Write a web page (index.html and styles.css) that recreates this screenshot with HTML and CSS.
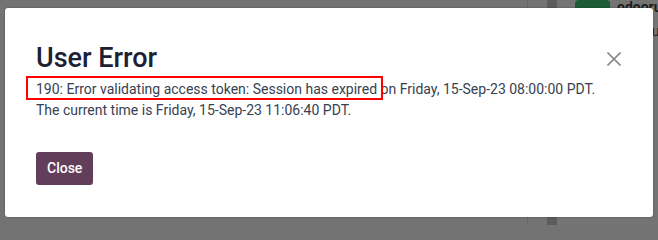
FILE: index.html
```html
<!DOCTYPE html>
<html lang="en">
<head>
<meta charset="utf-8">
<title>User Error</title>
<link rel="stylesheet" href="styles.css">
</head>
<body>
<div class="backdrop">
  <div class="main"></div>
  <div class="gutter"></div>
  <div class="band"></div>
  <div class="chatter">
    <div class="msg">
      <div class="avatar"></div>
      <div class="msg-body">
        <div class="author">odoorunbot</div>
        <div class="msg-line">2 minutes</div>
      </div>
    </div>
  </div>
</div>
<div class="modal" role="dialog">
  <div class="modal-header">
    <h4 class="modal-title">User Error</h4>
    <button class="btn-close" aria-label="Close">
      <svg width="14" height="14" viewBox="0 0 14 14"><path d="M0.5 0.5 L13.5 13.5 M13.5 0.5 L0.5 13.5" stroke="#8a8a8a" stroke-width="1.6" fill="none"/></svg>
    </button>
  </div>
  <div class="modal-body">
    <p>190: Error validating access token: Session has expired on Friday, 15-Sep-23 08:00:00 PDT.<br>The current time is Friday, 15-Sep-23 11:06:40 PDT.</p>
  </div>
  <div class="modal-footer">
    <button class="btn-primary">Close</button>
  </div>
  <div class="highlight"></div>
</div>
</body>
</html>
```
FILE: styles.css
```css
html, body {
  margin: 0;
  padding: 0;
  width: 658px;
  height: 225px;
  overflow: hidden;
}
body {
  background: #737373;
  font-family: Roboto, "Liberation Sans", sans-serif;
  position: relative;
}
.backdrop {
  display: flex;
  height: 225px;
}
.main {
  flex: 0 0 527px;
  border-right: 1px solid #666666;
}
.gutter {
  flex: 0 0 19px;
}
.band {
  flex: 0 0 10px;
  background: #5c5c5c;
}
.chatter {
  flex: 1 1 0;
  min-width: 0;
  overflow: hidden;
  padding-left: 18px;
  background: #747474;
}
.msg {
  display: flex;
  gap: 7px;
}
.avatar {
  flex: 0 0 35px;
  height: 30px;
  background: #1d5b35;
  border-radius: 4px;
}
.msg-body {
  color: #1e1e1e;
  font-size: 14px;
  line-height: 20px;
  margin-top: -3px;
  white-space: nowrap;
}
.author {
  font-weight: 700;
}
.msg-line {
  margin-top: 4px;
  color: #262626;
}
.modal {
  position: absolute;
  left: 5px;
  top: 8px;
  width: 648px;
  height: 209px;
  box-sizing: border-box;
  padding: 34px 32px 0 31px;
  background: #ffffff;
  border-radius: 3px;
  box-shadow: 0 0 2px rgba(0, 0, 0, 0.35);
  display: flex;
  flex-direction: column;
}
.modal-header {
  display: flex;
  justify-content: space-between;
  align-items: center;
}
.modal-title {
  margin: 0;
  font-size: 27px;
  line-height: 1.2;
  font-weight: 500;
  color: #1b2132;
}
.btn-close {
  border: 0;
  background: none;
  padding: 0;
  width: 14px;
  height: 14px;
  display: flex;
  margin-top: 2px;
}
.modal-body p {
  margin: 5px 0 0 0;
  font-size: 14px;
  line-height: 21px;
  color: #374151;
}
.modal-footer {
  margin-top: 31px;
}
.btn-primary {
  font-family: Roboto, "Liberation Sans", sans-serif;
  font-size: 14px;
  font-weight: 500;
  line-height: 21px;
  padding: 6px 11px;
  color: #ffffff;
  background: #633e5b;
  border: 0;
  border-radius: 3px;
}
.highlight {
  position: absolute;
  left: 21px;
  top: 68px;
  width: 357px;
  height: 24px;
  box-sizing: border-box;
  border: 2px solid #ff0000;
}
```
